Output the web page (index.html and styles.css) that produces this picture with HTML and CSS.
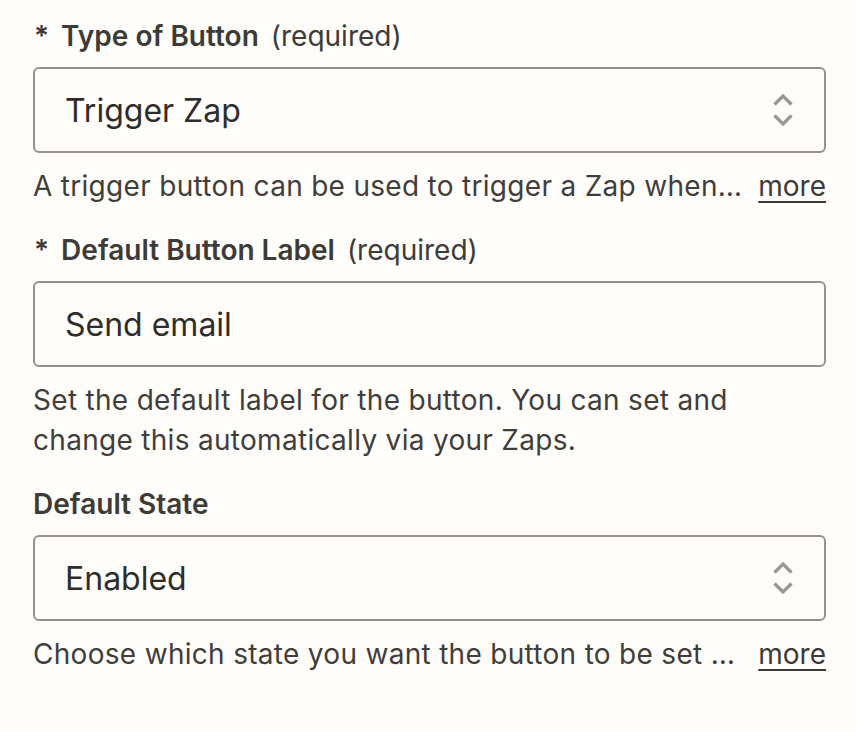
FILE: index.html
```html
<!DOCTYPE html>
<html>
<head>
<meta charset="utf-8">
<link rel="stylesheet" href="styles.css">
</head>
<body>
<div class="form">
  <div class="field">
    <div class="label"><span class="req">*</span><span class="name">Type of Button</span><span class="opt">(required)</span></div>
    <div class="box select">
      <span class="value">Trigger Zap</span>
      <svg class="chev" width="22" height="34" viewBox="0 0 22 34"><path d="M2.5 11.5 L11 3 L19.5 11.5 M2.5 22.5 L11 31 L19.5 22.5" fill="none" stroke="#9a978f" stroke-width="3.2" stroke-linejoin="miter"/></svg>
    </div>
    <div class="help row"><span class="trunc">A trigger button can be used to trigger a Zap when a user clicks on it within your Interface.</span><a class="more" href="#">more</a></div>
  </div>
  <div class="field">
    <div class="label"><span class="req">*</span><span class="name">Default Button Label</span><span class="opt">(required)</span></div>
    <div class="box input">
      <span class="value">Send email</span>
    </div>
    <div class="help">Set the default label for the button. You can set and change this automatically via your Zaps.</div>
  </div>
  <div class="field">
    <div class="label"><span class="name">Default State</span></div>
    <div class="box select">
      <span class="value">Enabled</span>
      <svg class="chev" width="22" height="34" viewBox="0 0 22 34"><path d="M2.5 11.5 L11 3 L19.5 11.5 M2.5 22.5 L11 31 L19.5 22.5" fill="none" stroke="#9a978f" stroke-width="3.2" stroke-linejoin="miter"/></svg>
    </div>
    <div class="help row"><span class="trunc">Choose which state you want the button to be set to by default when the page loads.</span><a class="more" href="#">more</a></div>
  </div>
</div>
</body>
</html>
```

FILE: styles.css
```css
html, body {
  margin: 0;
  padding: 0;
  background: #fffdf9;
}
body {
  font-family: Inter, "Noto Sans", sans-serif;
  color: #3c3b38;
}
.form {
  padding: 16px 30px 0 33px;
  display: flex;
  flex-direction: column;
  gap: 24px;
}
.field {
  display: flex;
  flex-direction: column;
}
.label {
  font-size: 28px;
  line-height: 40px;
  display: flex;
  align-items: baseline;
}
.req {
  font-weight: 600;
  margin-right: 12px;
  margin-left: 1px;
}
.name {
  font-weight: 600;
  margin-right: 12px;
}
.opt {
  font-weight: 400;
}
.box {
  margin-top: 11px;
  height: 86px;
  box-sizing: border-box;
  border: 2px solid #95928d;
  border-radius: 6px;
  display: flex;
  align-items: center;
  padding: 0 30px 0 30px;
}
.value {
  flex: 1;
  font-size: 32px;
  color: #2e2d2b;
}
.chev {
  display: block;
}
.help {
  margin-top: 13px;
  font-size: 28px;
  line-height: 40px;
  letter-spacing: 0.3px;
  color: #3f3e3b;
}
.row {
  display: flex;
  align-items: baseline;
}
.trunc {
  flex: 1;
  min-width: 0;
  white-space: nowrap;
  overflow: hidden;
  text-overflow: ellipsis;
  margin-right: 16px;
}
.more {
  color: #3c3b38;
  letter-spacing: 0;
  text-decoration: underline;
  text-underline-offset: 5px;
  text-decoration-thickness: 2px;
}
```
